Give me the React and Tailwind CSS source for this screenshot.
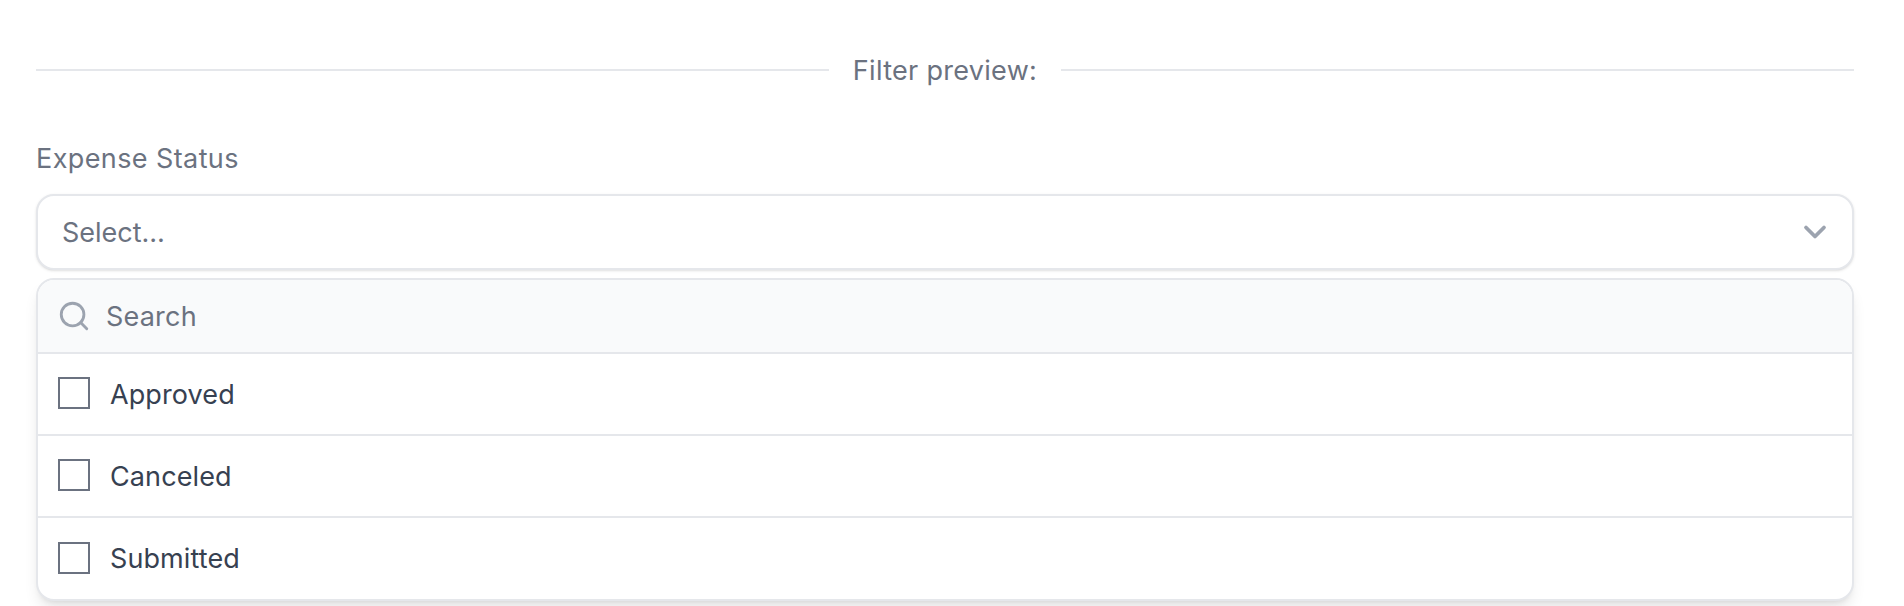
import React from "react";
import { ChevronDown, Search } from "lucide-react";

const options = ["Approved", "Canceled", "Submitted"];

export default function App() {
  return (
    <div className="h-[606px] overflow-hidden bg-white pl-9 pr-[50px] pt-[57px] font-['Inter',sans-serif] antialiased">
      {/* divider */}
      <div className="flex h-[26px] items-center">
        <div className="h-0.5 flex-1 bg-[#e5e7eb]" />
        <span className="px-6 pt-[2px] text-[27px] leading-[26px] tracking-[0.3px] text-[#6b7280]">
          Filter preview:
        </span>
        <div className="h-0.5 flex-1 bg-[#e5e7eb]" />
      </div>

      <label className="mt-[60px] block text-[27px] leading-[32px] tracking-[0.4px] text-[#6b7280]">
        Expense Status
      </label>

      <button className="mt-[19px] flex h-[76px] w-full items-center justify-between rounded-[18px] border-2 border-[#e5e7eb] bg-white pl-6 pr-[19px] shadow-sm">
        <span className="pt-[2px] text-[27px] text-[#6b7280]">Select…</span>
        <ChevronDown className="h-9 w-9 text-[#9ca3af]" strokeWidth={2.5} />
      </button>

      <div className="mt-2 overflow-hidden rounded-[18px] border-2 border-[#e5e7eb] bg-white shadow-lg">
        <div className="flex h-[74px] items-center gap-[15px] border-b-2 border-[#e5e7eb] bg-[#f9fafb] pl-[19px]">
          <Search className="h-[34px] w-[34px] text-[#9ca3af]" strokeWidth={2} />
          <span className="pt-[2px] text-[27px] tracking-[0.2px] text-[#6b7280]">Search</span>
        </div>
        {options.map((option, index) => (
          <div
            key={option}
            className={`flex items-center gap-5 pl-5 ${
              index < options.length - 1
                ? "h-[82px] border-b-2 border-[#e5e7eb]"
                : "h-[81px]"
            }`}
          >
            <span className="mb-[2px] h-8 w-8 border-2 border-[#6b7280] bg-white" />
            <span className="pt-[2px] text-[27px] tracking-[0.1px] text-[#374151]">{option}</span>
          </div>
        ))}
      </div>
    </div>
  );
}
